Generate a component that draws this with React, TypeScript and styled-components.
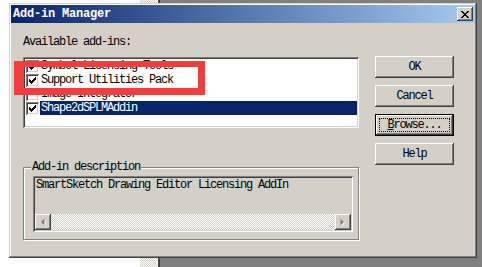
import styled, { createGlobalStyle } from 'styled-components'

const c = {
  face: '#d4d0c8',
  shadow: '#808080',
  dark: '#404040',
  light: '#ffffff',
  select: '#0a246a',
  red: '#f33c3c',
}

const mono = `"Liberation Mono", "DejaVu Sans Mono", monospace`

const GlobalStyle = createGlobalStyle`
  html, body {
    margin: 0;
    padding: 0;
    background: #fff;
  }
  body {
    font-family: ${mono};
    font-size: 12px;
    letter-spacing: -1.2px;
    color: #000;
  }
`

const raised = `
  box-shadow: inset -1px -1px 0 ${c.dark}, inset 1px 1px 0 ${c.light},
    inset -2px -2px 0 ${c.shadow}, inset 2px 2px 0 ${c.face};
`

const sunken = `
  box-shadow: inset 1px 1px 0 ${c.shadow}, inset -1px -1px 0 ${c.light},
    inset 2px 2px 0 ${c.dark}, inset -2px -2px 0 ${c.face};
`

const checker = `
  background: repeating-conic-gradient(#ffffff 0 25%, ${c.face} 0 50%) 0 0 / 2px 2px;
`

const Desktop = styled.div`
  position: relative;
  width: 482px;
  height: 267px;
  overflow: hidden;
  background: #fff;
`

const CheckerStrip = styled.div`
  position: absolute;
  left: 140px;
  top: 0;
  bottom: 0;
  width: 17px;
  ${checker}
`

const BackWindow = styled.div`
  position: absolute;
  left: 158px;
  top: 0;
  right: 0;
  bottom: 0;
  background: ${c.shadow};
  border-left: 2px solid ${c.dark};
`

const Dialog = styled.div`
  position: absolute;
  left: 9px;
  top: 3px;
  width: 468px;
  height: 255px;
  box-sizing: border-box;
  padding: 2px;
  background: ${c.face};
  box-shadow: inset -1px -1px 0 ${c.dark}, inset 1px 1px 0 ${c.face},
    inset -2px -2px 0 ${c.shadow}, inset 2px 2px 0 ${c.light};
  display: flex;
  flex-direction: column;
`

const TitleBar = styled.div`
  height: 18px;
  display: flex;
  align-items: center;
  padding-left: 2px;
  background: linear-gradient(to right, #0a246a, #a6caf0);
`

const Title = styled.div`
  flex: 1;
  color: #fff;
  font-weight: bold;
  font-size: 12px;
  letter-spacing: -0.2px;
  line-height: 18px;
`

const CloseButton = styled.div`
  width: 16px;
  height: 14px;
  margin-right: 2px;
  background: ${c.face};
  ${raised}
  display: flex;
  align-items: center;
  justify-content: center;
`

const Client = styled.div`
  flex: 1;
  display: flex;
  padding: 13px 0 0 12px;
`

const LeftColumn = styled.div`
  width: 336px;
  display: flex;
  flex-direction: column;
`

const Label = styled.div`
  height: 13px;
  line-height: 13px;
  white-space: nowrap;
`

const ListBox = styled.div`
  margin-top: 8px;
  height: 71px;
  box-sizing: border-box;
  padding: 2px;
  background: #fff;
  ${sunken}
  overflow: hidden;
`

const Row = styled.div`
  height: 14px;
  display: flex;
  align-items: center;
`

const CheckBox = styled.div`
  width: 13px;
  height: 13px;
  margin-left: 1px;
  box-sizing: border-box;
  background: #fff;
  ${sunken}
  flex: none;
`

const RowText = styled.div<{ $selected?: boolean }>`
  flex: 1;
  margin-left: 1px;
  padding: 0 1px;
  height: 14px;
  line-height: 14px;
  white-space: nowrap;
  background: ${(p) => (p.$selected ? c.select : 'transparent')};
  color: ${(p) => (p.$selected ? '#fff' : '#000')};
`

const GroupBox = styled.div`
  position: relative;
  margin-top: 39px;
  height: 73px;
  box-sizing: border-box;
  border: 1px solid ${c.shadow};
  box-shadow: inset 1px 1px 0 ${c.light}, 1px 1px 0 ${c.light};
  padding: 8px 5px 7px 9px;
`

const GroupLegend = styled.div`
  position: absolute;
  top: -7px;
  left: 7px;
  padding: 0 1px;
  line-height: 13px;
  background: ${c.face};
  white-space: nowrap;
`

const EditBox = styled.div`
  height: 56px;
  box-sizing: border-box;
  padding: 2px;
  background: ${c.face};
  ${sunken}
  display: flex;
  flex-direction: column;
`

const EditText = styled.div`
  padding: 1px 0 0 1px;
  line-height: 13px;
  white-space: nowrap;
`

const HScroll = styled.div`
  margin-top: auto;
  height: 16px;
  display: flex;
  ${checker}
`

const ScrollButton = styled.div`
  width: 16px;
  height: 16px;
  box-sizing: border-box;
  background: ${c.face};
  ${raised}
  display: flex;
  align-items: center;
  justify-content: center;
`

const ScrollTrack = styled.div`
  flex: 1;
`

const ButtonColumn = styled.div`
  margin-left: 16px;
  padding-top: 20px;
  width: 79px;
  display: flex;
  flex-direction: column;
  gap: 7px;
`

const Button = styled.div<{ $default?: boolean }>`
  position: relative;
  height: 22px;
  box-sizing: border-box;
  background: ${c.face};
  ${(p) =>
    p.$default
      ? `box-shadow: inset 0 0 0 1px #000, inset -2px -2px 0 ${c.dark}, inset 2px 2px 0 ${c.light},
        inset -3px -3px 0 ${c.shadow};`
      : raised}
  display: flex;
  align-items: center;
  justify-content: center;
  line-height: 13px;
`

const FocusRing = styled.div`
  position: absolute;
  inset: 4px;
  border: 1px dotted #000;
`

const Hotkey = styled.span`
  text-decoration: underline;
`

const RedMark = styled.div`
  position: absolute;
  left: 14px;
  top: 61px;
  width: 191px;
  height: 34px;
  box-sizing: border-box;
  border-style: solid;
  border-color: ${c.red};
  border-width: 6px 7px 7px 10px;
`

// pixel glyphs drawn as 1px runs
const runs = (rows: string[]) =>
  rows
    .flatMap((r, y) =>
      r.split('').map((ch, x) => (ch === 'x' ? `M${x} ${y}h1v1h-1z` : ''))
    )
    .join('')

const CheckMark = () => (
  <svg width="13" height="13" viewBox="0 0 13 13" shapeRendering="crispEdges">
    <path
      transform="translate(3 3)"
      fill="#000"
      d={runs([
        '......x',
        '.....xx',
        'x...xxx',
        'xx.xxx.',
        'xxxxx..',
        '.xxx...',
        '..x....',
      ])}
    />
  </svg>
)

const CloseGlyph = () => (
  <svg width="8" height="7" viewBox="0 0 8 7" shapeRendering="crispEdges">
    <path
      fill="#000"
      d={runs([
        'xx....xx',
        '.xx..xx.',
        '..xxxx..',
        '...xx...',
        '..xxxx..',
        '.xx..xx.',
        'xx....xx',
      ])}
    />
  </svg>
)

const Arrow = ({ dir }: { dir: 'left' | 'right' }) => {
  const pts = dir === 'left' ? '4,0 4,7 0.5,3.5' : '0,0 0,7 3.5,3.5'
  return (
    <svg width="6" height="9" viewBox="0 0 6 9">
      <polygon points={pts} fill="#fff" transform="translate(1.5 1.5)" />
      <polygon points={pts} fill={c.shadow} transform="translate(0.5 0.5)" />
    </svg>
  )
}

const items = [
  { name: 'Symbol Licensing Tools', checked: true },
  { name: 'Support Utilities Pack', checked: true },
  { name: 'Image Integrator', checked: false },
  { name: 'Shape2dSPLMAddin', checked: true, selected: true },
]

export default function App() {
  return (
    <Desktop>
      <GlobalStyle />
      <CheckerStrip />
      <BackWindow />
      <Dialog>
        <TitleBar>
          <Title>Add-in Manager</Title>
          <CloseButton>
            <CloseGlyph />
          </CloseButton>
        </TitleBar>
        <Client>
          <LeftColumn>
            <Label>Available add-ins:</Label>
            <ListBox>
              {items.map((it) => (
                <Row key={it.name}>
                  <CheckBox>{it.checked && <CheckMark />}</CheckBox>
                  <RowText $selected={it.selected}>{it.name}</RowText>
                </Row>
              ))}
            </ListBox>
            <GroupBox>
              <GroupLegend>Add-in description</GroupLegend>
              <EditBox>
                <EditText>SmartSketch Drawing Editor Licensing AddIn</EditText>
                <HScroll>
                  <ScrollButton>
                    <Arrow dir="left" />
                  </ScrollButton>
                  <ScrollTrack />
                  <ScrollButton>
                    <Arrow dir="right" />
                  </ScrollButton>
                </HScroll>
              </EditBox>
            </GroupBox>
          </LeftColumn>
          <ButtonColumn>
            <Button>OK</Button>
            <Button>Cancel</Button>
            <Button $default>
              <FocusRing />
              <span>
                <Hotkey>B</Hotkey>rowse...
              </span>
            </Button>
            <Button>Help</Button>
          </ButtonColumn>
        </Client>
      </Dialog>
      <RedMark />
    </Desktop>
  )
}
